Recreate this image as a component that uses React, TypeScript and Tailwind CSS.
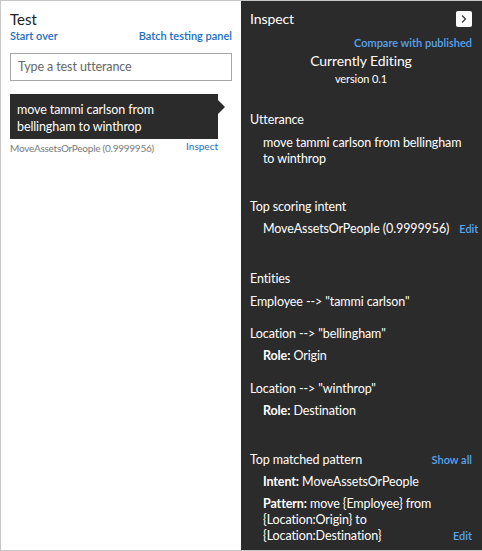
const font = { fontFamily: 'Lato, "Liberation Sans", sans-serif' }

function Chevron() {
  return (
    <svg width="8" height="10" viewBox="0 0 8 10" fill="none">
      <path d="M2 1.5 L5.5 5 L2 8.5" stroke="#333" strokeWidth="1.2" />
    </svg>
  )
}

function TestPanel() {
  return (
    <div className="flex w-[240px] shrink-0 flex-col bg-white px-[9px] pt-[8px]">
      <div className="text-[15px] leading-[20px] text-[#222]">Test</div>
      <div className="flex justify-between text-[11px] font-semibold leading-[14px] text-[#1b6ec2]">
        <span>Start over</span>
        <span>Batch testing panel</span>
      </div>
      <div className="mt-[10px] flex h-[28px] items-center border border-[#a6a6a6] px-[7px] text-[12.5px] tracking-[-0.1px] text-[#666]">
        Type a test utterance
      </div>
      <div className="relative mt-[13px] w-[208px] bg-[#2b2b2b] pt-[7px] pb-[4px] pl-[7px] pr-[7px] text-[12.5px] leading-[17px] tracking-[-0.1px] text-white">
        move tammi carlson from bellingham to winthrop
        <div className="absolute right-[-7px] top-[6px] h-0 w-0 border-y-[7px] border-l-[7px] border-y-transparent border-l-[#2b2b2b]" />
      </div>
      <div className="mt-[2px] flex w-[208px] items-start justify-between text-[10px] leading-[14px]">
        <span className="tracking-[-0.25px] text-[#7a7a7a]">MoveAssetsOrPeople (0.9999956)</span>
        <span className="-mt-[2px] text-[#1b6ec2]">Inspect</span>
      </div>
    </div>
  )
}

function InspectPanel() {
  return (
    <div className="flex min-w-0 flex-1 flex-col bg-[#2b2b2b] pl-[9px] pr-[10px] pt-[8px] text-[12.5px] leading-[16px] tracking-[-0.1px] text-white">
      <div className="flex items-center justify-between">
        <span className="text-[14px] leading-[20px]">Inspect</span>
        <span className="flex h-[16px] w-[16px] items-center justify-center rounded-[2px] bg-white">
          <Chevron />
        </span>
      </div>
      <div className="mt-[7px] text-right text-[11px] font-semibold leading-[14px] tracking-normal text-[#5aa5f0]">Compare with published</div>
      <div className="mt-[1px] text-center text-[14px] leading-[20px]">Currently Editing</div>
      <div className="text-center text-[11px] leading-[16px]">version 0.1</div>

      <div className="mt-[25px]">Utterance</div>
      <div className="mt-[7px] pl-[13px]">move tammi carlson from bellingham to winthrop</div>

      <div className="mt-[32px]">Top scoring intent</div>
      <div className="mt-[6px] flex items-baseline gap-[10px] whitespace-nowrap pl-[13px]">
        <span>MoveAssetsOrPeople (0.9999956)</span>
        <span className="text-[11px] font-semibold tracking-normal text-[#5aa5f0]">Edit</span>
      </div>

      <div className="mt-[34px]">Entities</div>
      <div className="mt-[7px]">Employee --&gt; "tammi carlson"</div>
      <div className="mt-[16px]">Location --&gt; "bellingham"</div>
      <div className="mt-[6px] pl-[13px]"><b>Role:</b> Origin</div>
      <div className="mt-[17px]">Location --&gt; "winthrop"</div>
      <div className="mt-[6px] pl-[13px]"><b>Role:</b> Destination</div>

      <div className="mt-[33px] flex items-baseline justify-between">
        <span>Top matched pattern</span>
        <span className="text-[11px] font-semibold tracking-normal text-[#5aa5f0]">Show all</span>
      </div>
      <div className="mt-[6px] pl-[13px]"><b>Intent:</b> MoveAssetsOrPeople</div>
      <div className="mt-[6px] flex items-end justify-between pl-[13px]">
        <span className="w-[185px]"><b>Pattern:</b> move {'{Employee}'} from {'{Location:Origin}'} to {'{Location:Destination}'}</span>
        <span className="text-[11px] font-semibold tracking-normal text-[#5aa5f0]">Edit</span>
      </div>
    </div>
  )
}

export default function App() {
  return (
    <div style={font} className="flex h-[551px] w-[482px] border-y border-l border-[#c6c6c6]">
      <TestPanel />
      <InspectPanel />
    </div>
  )
}
